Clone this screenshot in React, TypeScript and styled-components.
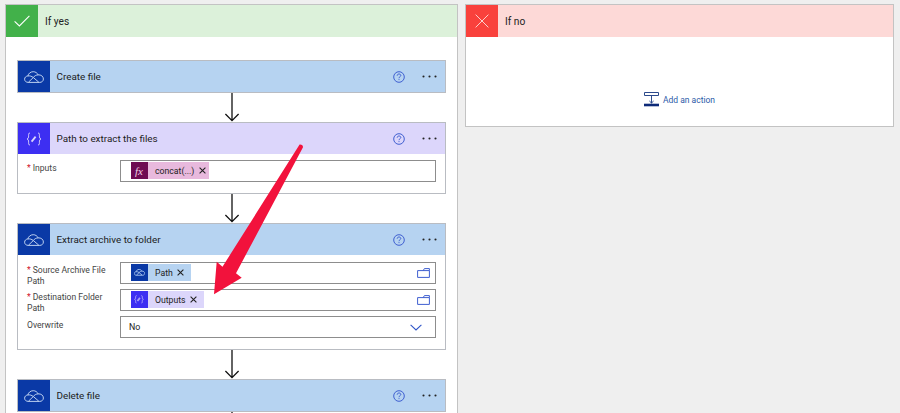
import React from "react";
import styled, { createGlobalStyle } from "styled-components";

const Global = createGlobalStyle`
  html, body { margin: 0; padding: 0; background: #efefef; }
  body { font-family: Roboto, "Open Sans", "Liberation Sans", sans-serif; color: #222; }
`;

const Canvas = styled.div`
  position: relative;
  display: flex;
  align-items: flex-start;
  gap: 7px;
  width: 900px;
  height: 413px;
  padding: 4px 5px 0;
  box-sizing: border-box;
  overflow: hidden;
  background: #efefef;
`;

const Branch = styled.section<{ $w: number; $h: number }>`
  flex: none;
  width: ${(p) => p.$w}px;
  height: ${(p) => p.$h}px;
  box-sizing: border-box;
  border: 1px solid #c3c3c3;
  background: #fff;
`;

const BranchHead = styled.header<{ $bg: string }>`
  display: flex;
  align-items: center;
  height: 32px;
  background: ${(p) => p.$bg};
  font-size: 10.2px;
`;

const BranchIcon = styled.span<{ $bg: string }>`
  flex: none;
  display: flex;
  align-items: center;
  justify-content: center;
  width: 32px;
  height: 32px;
  margin-right: 7px;
  background: ${(p) => p.$bg};
`;

const Flow = styled.div`
  display: flex;
  flex-direction: column;
  padding: 23px 11px 0;
`;

const Card = styled.article`
  flex: none;
  box-sizing: border-box;
  width: 429px;
  border: 1px solid #b9bcc2;
  background: #fff;
`;

const CardHead = styled.header<{ $bg: string }>`
  display: flex;
  align-items: center;
  height: 31px;
  background: ${(p) => p.$bg};
`;

const CardIcon = styled.span<{ $bg: string }>`
  flex: none;
  display: flex;
  align-items: center;
  justify-content: center;
  width: 32px;
  height: 31px;
  background: ${(p) => p.$bg};
`;

const CardTitle = styled.h3`
  flex: 1;
  margin: 0 0 1px 6.5px;
  font-size: 9.9px;
  font-weight: 400;
  color: #1c1c1c;
`;

const HeadTools = styled.span`
  display: flex;
  align-items: center;
  gap: 17px;
  padding-right: 8px;
`;

const CardBody = styled.div<{ $pt: number; $pb: number }>`
  display: flex;
  flex-direction: column;
  gap: 5px;
  padding: ${(p) => p.$pt}px 9px ${(p) => p.$pb}px;
`;

const Row = styled.div`
  display: flex;
  height: 22px;
`;

const Label = styled.label<{ $pt?: number }>`
  flex: none;
  width: 93px;
  padding-top: ${(p) => p.$pt ?? 3}px;
  font-size: 8.6px;
  line-height: 10.6px;
  color: #444;
`;

const Req = styled.span`
  color: #d0112b;
  margin-right: 2px;
`;

const Field = styled.div`
  flex: 1;
  display: flex;
  align-items: center;
  justify-content: space-between;
  box-sizing: border-box;
  height: 22px;
  padding: 0 5px 1px 9.5px;
  border: 1px solid #8d8d8d;
  border-right-width: 1.5px;
  border-bottom-width: 1.5px;
  background: #fff;
`;

const SelectField = styled(Field)`
  padding: 0 13px 0 8px;
  font-size: 8.8px;
  color: #222;
`;

const Token = styled.span<{ $bg: string; $pr: number }>`
  display: inline-flex;
  align-items: center;
  height: 17px;
  padding-right: ${(p) => p.$pr}px;
  background: ${(p) => p.$bg};
  font-size: 8.7px;
  color: #222;
`;

const TokenIcon = styled.span<{ $bg: string }>`
  flex: none;
  display: flex;
  align-items: center;
  justify-content: center;
  width: 17px;
  height: 17px;
  margin-right: 7.5px;
  background: ${(p) => p.$bg};
`;

const Fx = styled.span`
  font-family: "Liberation Serif", serif;
  font-style: italic;
  font-size: 11px;
  color: #f0d0e6;
`;

const TokenClose = styled.svg`
  margin-left: 4.5px;
`;

const Connector = styled.div`
  flex: none;
  display: flex;
  justify-content: center;
  height: 29px;
`;

const AddWrap = styled.div`
  display: flex;
  align-items: center;
  justify-content: center;
  gap: 4px;
  padding-top: 55px;
`;

const AddText = styled.a`
  font-size: 8.5px;
  color: #2c5aa8;
`;

const Pointer = styled.svg`
  position: absolute;
  left: 0;
  top: 0;
  pointer-events: none;
`;

const Cloud = ({ s = 1, c = "#cfe0f7" }: { s?: number; c?: string }) => (
  <svg width={20 * s} height={12 * s} viewBox="0 0 20 12" fill="none" stroke={c} strokeWidth={0.9 / s}>
    <path d="M4.3 11.4 C2 11.4 .6 9.9 .6 8.2 C.6 6.4 2 5.1 3.8 5 C4.4 2.6 6.5 .7 9.2 .7 C11.5 .7 13.3 2 14.2 3.9 C16.9 3.6 19.4 5.3 19.4 8 C19.4 10 17.8 11.4 15.8 11.4 Z" />
    <path d="M3.8 5 C6 4.6 7.8 5.3 9.3 6.5 L14.8 11.2 M14.2 3.9 C12 3.9 10.4 5 9.3 6.5 M9.3 6.5 L4.3 11.4" />
  </svg>
);

const Braces = ({ s = 1, c = "#dcd6fb" }: { s?: number; c?: string }) => (
  <svg width={16 * s} height={14 * s} viewBox="0 0 16 14" fill="none" stroke={c} strokeWidth={1 / s}>
    <path d="M4 1 C2.6 1 2.6 2 2.6 3.5 C2.6 5.5 2.4 6.6 1 7 C2.4 7.4 2.6 8.5 2.6 10.5 C2.6 12 2.6 13 4 13" />
    <path d="M12 1 C13.4 1 13.4 2 13.4 3.5 C13.4 5.5 13.6 6.6 15 7 C13.6 7.4 13.4 8.5 13.4 10.5 C13.4 12 13.4 13 12 13" />
    <path d="M5.6 9.6 L9.6 4.6" strokeWidth={1.8 / s} />
  </svg>
);

const Help = () => (
  <svg width="12" height="12" viewBox="0 0 12 12" fill="none" stroke="#3f5fd0" strokeWidth="1">
    <circle cx="6" cy="6" r="5.3" />
    <path d="M4.2 4.7 C4.2 3.6 5 3 6 3 C7 3 7.8 3.6 7.8 4.5 C7.8 5.7 6 5.7 6 7.2" />
    <path d="M6 8.2 V9.1" />
  </svg>
);

const Dots = () => (
  <svg width="15" height="3" viewBox="0 0 15 3" fill="#222">
    <circle cx="1.5" cy="1.5" r="1.05" />
    <circle cx="7.5" cy="1.5" r="1.05" />
    <circle cx="13.5" cy="1.5" r="1.05" />
  </svg>
);

const Folder = () => (
  <svg width="13" height="10" viewBox="0 0 13 10" fill="none" stroke="#3f5fd0" strokeWidth="1">
    <path d="M.6 2.6 H12.4 V9.4 H.6 Z" />
    <path d="M6.2 2.6 L7.4 .6 H12.4 V2.6" />
  </svg>
);

const Chevron = () => (
  <svg width="12" height="7" viewBox="0 0 12 7" fill="none" stroke="#2f55c8" strokeWidth="1.1">
    <path d="M.6 .8 L6 6 L11.4 .8" />
  </svg>
);

const Close = () => (
  <TokenClose width="7" height="7" viewBox="0 0 7 7" stroke="#222" strokeWidth="1.1">
    <path d="M.6 .6 L6.4 6.4 M6.4 .6 L.6 6.4" />
  </TokenClose>
);

const DownArrow = () => (
  <svg width="16" height="29" viewBox="0 0 16 29" fill="none" stroke="#111" strokeWidth="1.3">
    <path d="M8 0 V27.6 M1.4 21 L8 27.6 L14.6 21" />
  </svg>
);

const CardHeader = ({ kind, title }: { kind: "drive" | "var"; title: string }) => (
  <CardHead $bg={kind === "drive" ? "#b6d3f1" : "#dcd6fb"}>
    <CardIcon $bg={kind === "drive" ? "#0a39a6" : "#3d2ff2"}>
      {kind === "drive" ? <Cloud /> : <Braces />}
    </CardIcon>
    <CardTitle>{title}</CardTitle>
    <HeadTools>
      <Help />
      <Dots />
    </HeadTools>
  </CardHead>
);

export default function App() {
  return (
    <Canvas>
      <Global />
      <Branch $w={453} $h={500}>
        <BranchHead $bg="#dcf1da">
          <BranchIcon $bg="#42b14a">
            <svg width="16" height="12" viewBox="0 0 16 12" fill="none" stroke="#fff" strokeWidth="1.1">
              <path d="M.6 6.4 L5.4 11 L15.4 .8" />
            </svg>
          </BranchIcon>
          If yes
        </BranchHead>
        <Flow>
          <Card>
            <CardHeader kind="drive" title="Create file" />
          </Card>
          <Connector>
            <DownArrow />
          </Connector>
          <Card>
            <CardHeader kind="var" title="Path to extract the files" />
            <CardBody $pt={6} $pb={11}>
              <Row>
                <Label>
                  <Req>*</Req>Inputs
                </Label>
                <Field>
                  <Token $bg="#e8b9dd" $pr={3.5}>
                    <TokenIcon $bg="#6e0b52">
                      <Fx>fx</Fx>
                    </TokenIcon>
                    concat(...)
                    <Close />
                  </Token>
                </Field>
              </Row>
            </CardBody>
          </Card>
          <Connector>
            <DownArrow />
          </Connector>
          <Card>
            <CardHeader kind="drive" title="Extract archive to folder" />
            <CardBody $pt={7} $pb={11}>
              <Row>
                <Label>
                  <Req>*</Req>Source Archive File Path
                </Label>
                <Field>
                  <Token $bg="#b6d3f1" $pr={7}>
                    <TokenIcon $bg="#0a39a6">
                      <Cloud s={0.55} c="#a9c6ee" />
                    </TokenIcon>
                    Path
                    <Close />
                  </Token>
                  <Folder />
                </Field>
              </Row>
              <Row>
                <Label>
                  <Req>*</Req>Destination Folder Path
                </Label>
                <Field>
                  <Token $bg="#dcd6fb" $pr={7}>
                    <TokenIcon $bg="#3d2ff2">
                      <Braces s={0.62} c="#a9a0f7" />
                    </TokenIcon>
                    Outputs
                    <Close />
                  </Token>
                  <Folder />
                </Field>
              </Row>
              <Row>
                <Label $pt={4}>Overwrite</Label>
                <SelectField>
                  No
                  <Chevron />
                </SelectField>
              </Row>
            </CardBody>
          </Card>
          <Connector>
            <DownArrow />
          </Connector>
          <Card>
            <CardHeader kind="drive" title="Delete file" />
          </Card>
          <Connector>
            <DownArrow />
          </Connector>
        </Flow>
      </Branch>
      <Branch $w={429} $h={123}>
        <BranchHead $bg="#fdd9d7">
          <BranchIcon $bg="#f9413c">
            <svg width="14" height="14" viewBox="0 0 14 14" stroke="#fbd0cd" strokeWidth="1">
              <path d="M.6 .6 L13.4 13.4 M13.4 .6 L.6 13.4" />
            </svg>
          </BranchIcon>
          If no
        </BranchHead>
        <AddWrap>
          <svg width="15" height="15" viewBox="0 0 15 15" fill="none" stroke="#2c4a8c" strokeWidth="1">
            <path d="M.5 .5 H14.5 V3.5 H.5 Z" />
            <path d="M7.5 3.5 V11 M5.4 9 L7.5 11 L9.6 9" />
            <path d="M0 13 H15" stroke="#0d2a78" strokeWidth="2.6" />
          </svg>
          <AddText>Add an action</AddText>
        </AddWrap>
      </Branch>
      <Pointer width="900" height="413" viewBox="0 0 900 413">
        <path
          d="M299.6 144.6 Q303 144.4 303 147.2 L236 273.3 L241.7 277.7 L214 294.3 L216.7 261.7 L222.5 266.7 Z"
          fill="#f2123c"
        />
      </Pointer>
    </Canvas>
  );
}
